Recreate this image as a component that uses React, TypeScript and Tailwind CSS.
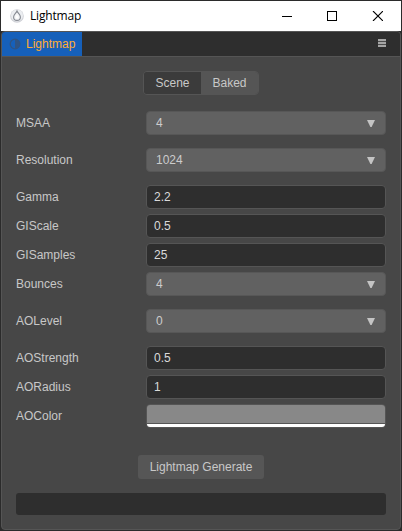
import React from 'react';

type Kind = 'select' | 'input' | 'color';
interface Field {
  label: string;
  kind: Kind;
  value?: string;
  gap: string;
}

const fields: Field[] = [
  { label: 'MSAA', kind: 'select', value: '4', gap: 'mt-4' },
  { label: 'Resolution', kind: 'select', value: '1024', gap: 'mt-[13px]' },
  { label: 'Gamma', kind: 'input', value: '2.2', gap: 'mt-[13px]' },
  { label: 'GIScale', kind: 'input', value: '0.5', gap: 'mt-[5px]' },
  { label: 'GISamples', kind: 'input', value: '25', gap: 'mt-[5px]' },
  { label: 'Bounces', kind: 'select', value: '4', gap: 'mt-[5px]' },
  { label: 'AOLevel', kind: 'select', value: '0', gap: 'mt-[13px]' },
  { label: 'AOStrength', kind: 'input', value: '0.5', gap: 'mt-[13px]' },
  { label: 'AORadius', kind: 'input', value: '1', gap: 'mt-[5px]' },
  { label: 'AOColor', kind: 'color', gap: 'mt-[5px]' },
];

function Control({ kind, value }: { kind: Kind; value?: string }) {
  if (kind === 'select') {
    return (
      <div className="flex h-6 w-60 items-center justify-between rounded-[4px] border border-[#575757] bg-[#616161] pl-[9px] pr-2.5 text-[#cccccc]">
        <span>{value}</span>
        <svg className="h-[7px] w-2" viewBox="0 0 8 7">
          <path d="M0 0H8L4.6 7H3.4Z" fill="#c4c4c4" />
        </svg>
      </div>
    );
  }
  if (kind === 'input') {
    return (
      <div className="flex h-6 w-60 items-center rounded-[4px] border border-[#555] bg-[#2e2e2e] pl-[7px] text-[#dadada]">
        {value}
      </div>
    );
  }
  return (
    <div className="flex h-6 w-60 flex-col overflow-hidden rounded-[4px] border border-[#555]">
      <div className="h-[18px] bg-[#888]" />
      <div className="h-px bg-[#555]" />
      <div className="h-[3px] bg-white" />
    </div>
  );
}

export default function App() {
  return (
    <div className="flex h-[531px] w-[402px] flex-col bg-[#2b2b2b] p-px text-[12px] leading-[14px]" style={{ fontFamily: '"Liberation Sans", Arial, sans-serif' }}>
      <header className="flex h-[30px] shrink-0 items-center bg-white pl-[9px] pr-[18px] text-black">
        <svg className="size-[14px]" viewBox="0 0 14 14">
          <circle cx="7" cy="7" r="6.8" fill="#cfd1d6" />
          <circle cx="7" cy="6.4" r="6" fill="#eceef1" />
          <path d="M7 2C6.2 4.2 3.6 5.4 3.6 8a3.4 3.4 0 0 0 6.8 0C10.4 5.4 7.8 4.2 7 2Z" fill="#f4f5f7" stroke="#868a92" strokeWidth="1.1" />
          <path d="M7 5.4C6.5 6.8 5.9 7.2 5.9 8.4a1.1 1.1 0 0 0 2.2 0C8.1 7.2 7.5 6.8 7 5.4Z" fill="#fff" />
        </svg>
        <span className="ml-1.5 flex-1 font-['Open_Sans',sans-serif] text-[12px] leading-4 tracking-[-0.18px]">Lightmap</span>
        <svg className="h-[10px] w-[101px]" viewBox="0 0 101 10" fill="none" stroke="#000">
          <path d="M0 5.5H10M45.5 .5H54.5V9.5H45.5Z" shapeRendering="crispEdges" />
          <path d="M91 0L101 10M101 0L91 10" strokeWidth="1.1" />
        </svg>
      </header>
      <main className="flex min-h-0 flex-1 flex-col overflow-hidden rounded-[4px] border border-[#555] bg-[#474747]">
        <nav className="flex h-[25px] shrink-0 items-start justify-between border-b border-[#555] bg-[#2e2e2e] pr-[14px]">
          <div className="flex h-6 w-20 items-center bg-[#1660ba] pl-[7px] text-[#ffac33]">
            <svg className="size-3" viewBox="0 0 12 12">
              <circle cx="6" cy="6" r="4.8" fill="none" stroke="#2f5484" strokeWidth="1.3" />
              <path d="M6 1.2A4.8 4.8 0 0 1 6 10.8Z" fill="#2f5484" />
            </svg>
            <span className="ml-[5px]">Lightmap</span>
          </div>
          <svg className="mt-[7px] h-2 w-2" viewBox="0 0 8 8" shapeRendering="crispEdges">
            <path d="M0 0H8V2H0ZM0 3H8V5H0ZM0 6H8V8H0Z" fill="#a5a5a5" />
            <path d="M0 2H8V3H0ZM0 5H8V6H0Z" fill="#4c4c4c" />
          </svg>
        </nav>
        <div className="flex flex-1 flex-col px-[14px] pt-[14px] text-[#c8c8c8]">
          <div className="flex h-6 w-[116px] shrink-0 self-center overflow-hidden rounded-[4px] border border-[#555]">
            <div className="flex w-[57px] items-center justify-center bg-[#3b3b3b]">Scene</div>
            <div className="flex flex-1 items-center justify-center bg-[#555]">Baked</div>
          </div>
          {fields.map((field) => (
            <div key={field.label} className={`flex h-6 shrink-0 items-center justify-between ${field.gap}`}>
              <span>{field.label}</span>
              <Control kind={field.kind} value={field.value} />
            </div>
          ))}
          <button className="mt-[27px] flex h-6 w-[126px] shrink-0 items-center justify-center self-center rounded-[3px] bg-[#565656]">
            Lightmap Generate
          </button>
          <div className="mt-[14px] h-[22px] shrink-0 rounded-[3px] bg-[#2e2e2e]" />
        </div>
      </main>
    </div>
  );
}
